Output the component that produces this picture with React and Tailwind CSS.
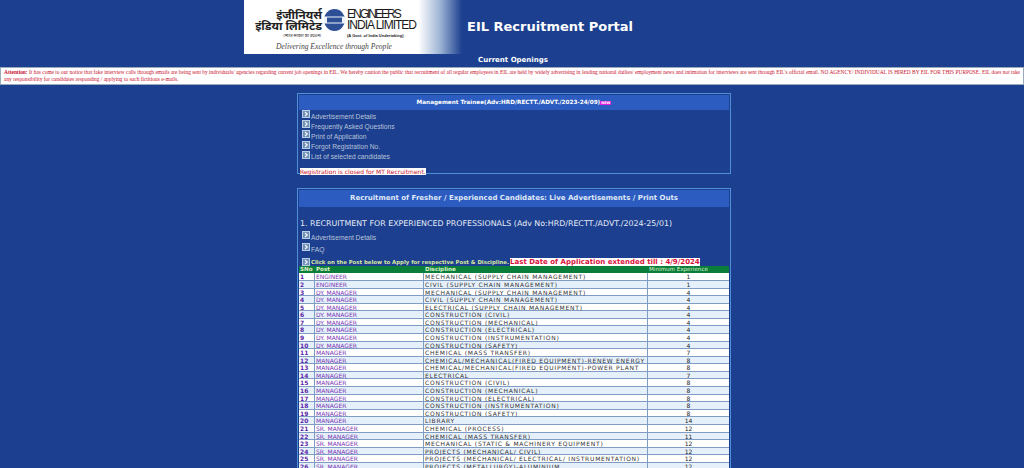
const verdana = "font-['DejaVu_Sans',sans-serif]"
const arial = "font-['Liberation_Sans',sans-serif]"

const rows = [
  ["ENGINEER", "MECHANICAL (SUPPLY CHAIN MANAGEMENT)", 1],
  ["ENGINEER", "CIVIL (SUPPLY CHAIN MANAGEMENT)", 1],
  ["DY. MANAGER", "MECHANICAL (SUPPLY CHAIN MANAGEMENT)", 4],
  ["DY. MANAGER", "CIVIL (SUPPLY CHAIN MANAGEMENT)", 4],
  ["DY. MANAGER", "ELECTRICAL (SUPPLY CHAIN MANAGEMENT)", 4],
  ["DY. MANAGER", "CONSTRUCTION (CIVIL)", 4],
  ["DY. MANAGER", "CONSTRUCTION (MECHANICAL)", 4],
  ["DY. MANAGER", "CONSTRUCTION (ELECTRICAL)", 4],
  ["DY. MANAGER", "CONSTRUCTION (INSTRUMENTATION)", 4],
  ["DY. MANAGER", "CONSTRUCTION (SAFETY)", 4],
  ["MANAGER", "CHEMICAL (MASS TRANSFER)", 7],
  ["MANAGER", "CHEMICAL/MECHANICAL(FIRED EQUIPMENT)-RENEW ENERGY", 8],
  ["MANAGER", "CHEMICAL/MECHANICAL(FIRED EQUIPMENT)-POWER PLANT", 8],
  ["MANAGER", "ELECTRICAL", 7],
  ["MANAGER", "CONSTRUCTION (CIVIL)", 8],
  ["MANAGER", "CONSTRUCTION (MECHANICAL)", 8],
  ["MANAGER", "CONSTRUCTION (ELECTRICAL)", 8],
  ["MANAGER", "CONSTRUCTION (INSTRUMENTATION)", 8],
  ["MANAGER", "CONSTRUCTION (SAFETY)", 8],
  ["MANAGER", "LIBRARY", 14],
  ["SR. MANAGER", "CHEMICAL (PROCESS)", 12],
  ["SR. MANAGER", "CHEMICAL (MASS TRANSFER)", 11],
  ["SR. MANAGER", "MECHANICAL (STATIC & MACHINERY EQUIPMENT)", 12],
  ["SR. MANAGER", "PROJECTS (MECHANICAL/ CIVIL)", 12],
  ["SR. MANAGER", "PROJECTS (MECHANICAL/ ELECTRICAL/ INSTRUMENTATION)", 12],
  ["SR. MANAGER", "PROJECTS (METALLURGY)-ALUMINIUM", 12],
]

function ArrowIcon() {
  return <svg width="8" height="8" viewBox="0 0 8 8" className="shrink-0">
    <rect width="8" height="8" fill="#b9cfe6" />
    <rect x="1" y="1" width="6" height="6" fill="#6f8fb8" />
    <path d="M3 2 L5.2 4 L3 6" fill="none" stroke="#f2f6fb" strokeWidth="1.2" />
  </svg>
}

function LinkItem({ label, className = "" }) {
  return <div className={`flex items-start gap-[1px] h-[10.2px] ${className}`}>
    <ArrowIcon />
    <span className={`${arial} text-[6.7px] leading-[10px] mt-[1.5px] text-[#b8c4da] whitespace-nowrap`}>{label}</span>
  </div>
}

function Logo() {
  return <div className="w-[218px] h-[54px] bg-[linear-gradient(90deg,#ffffff_0%,#ffffff_80%,#9db4d4_90%,#1c3f8f_100%)] shrink-0 pl-[6px] pt-[9px]">
    <div className="flex items-start h-[33px]">
      <div className="w-[72px] text-right text-[#222] font-['Noto_Sans','DejaVu_Sans',sans-serif] whitespace-nowrap">
        <div className="text-[11.8px] leading-[11px] font-bold">इंजीनियर्स</div>
        <div className="text-[11.8px] leading-[11px] font-bold">इंडिया लिमिटेड</div>
        <div className="text-[4px] leading-[6px] mt-[2px] pr-[1px]">(भारत सरकार का उपक्रम)</div>
      </div>
      <svg width="21" height="22" viewBox="0 0 21 22" className="ml-[2px] shrink-0">
        <ellipse cx="10.5" cy="11" rx="10.5" ry="11" fill="#2d4f96" />
        <rect x="0" y="7.5" width="21" height="7" fill="#eef2f8" />
        <rect x="3" y="8.5" width="15" height="5" fill="#2d4f96" />
      </svg>
      <div className={`${arial} ml-[2px] text-[#1a1a1a] whitespace-nowrap`}>
        <div className="text-[12px] leading-[11px] tracking-[-2px]">ENGINEERS</div>
        <div className="text-[12px] leading-[11px] tracking-[-1px]">INDIA LIMITED</div>
        <div className="text-[4px] leading-[6px] mt-[2px] font-bold">(A Govt. of India Undertaking)</div>
      </div>
    </div>
    <div className="font-['Liberation_Serif',serif] italic text-[#444] text-[7.6px] leading-[10px] pl-[26px] whitespace-nowrap">Delivering Excellence through People</div>
  </div>
}

function Panel({ children, className = "" }) {
  return <div className={`w-[434px] ml-[297px] border border-[#4f8fd8] p-[1px] ${className}`}>{children}</div>
}

export default function App() {
  return <div className={`${verdana} w-[1024px] h-[468px] overflow-hidden bg-[#1c3f8f]`}>
    <div className="flex pl-[244px]">
      <Logo />
      <div className="ml-[5px] pt-[17px] text-white font-bold text-[13px] leading-[20px] whitespace-nowrap">EIL Recruitment Portal</div>
    </div>

    <div className="text-center pl-[2px] text-white font-bold text-[7px] leading-[10px] mt-[1px] h-[12px]">Current Openings</div>

    <div className="bg-white border border-[#9ab] h-[18px] px-[3px] pt-[1px] font-['Liberation_Serif',serif] text-[5.4px] leading-[7px] text-[#c8102e] text-justify">
      <b>Attention:</b> It has come to our notice that fake interview calls through emails are being sent by individuals/ agencies regarding current job openings in EIL. We hereby caution the public that recruitment of all regular employees in EIL are held by widely advertising in leading national dailies/ employment news and intimation for interviews are sent through EIL's official email. NO AGENCY/ INDIVIDUAL IS HIRED BY EIL FOR THIS PURPOSE. EIL does not take any responsibility for candidates responding / applying to such fictitious e-mails.
    </div>

    <Panel className="mt-[8px] h-[81px]">
      <div className="h-[15px] bg-[#2d5cc0] flex items-center justify-center text-white font-bold text-[5.7px]">
        Management Trainee(Adv:HRD/RECTT./ADVT./2023-24/09)
        <span className="bg-[#e020e0] text-[3.5px] leading-[4px] px-[1px]">NEW</span>
      </div>
      <div className="pl-[3px]">
        <LinkItem label="Advertisement Details" />
        <LinkItem label="Frequently Asked Questions" />
        <LinkItem label="Print of Application" />
        <LinkItem label="Forgot Registration No." />
        <LinkItem label="List of selected candidates" />
      </div>
      <div className="mt-[7px] ml-[1px] w-fit bg-white text-[#c8102e] text-[6px] leading-[7px] whitespace-nowrap">Registration is closed for MT Recruitment.</div>
    </Panel>

    <Panel className="mt-[14px] h-[300px]">
      <div className="h-[17px] bg-[#2d5cc0] flex items-center justify-center text-[#dfe8f7] font-bold text-[7px]">
        Recruitment of Fresher / Experienced Candidates: Live Advertisements / Print Outs
      </div>
      <div className="mt-[12px] pl-[1px] text-[#e4ebf7] text-[7.9px] leading-[10px] whitespace-nowrap">1. RECRUITMENT FOR EXPERIENCED PROFESSIONALS (Adv No:HRD/RECTT./ADVT./2024-25/01)</div>
      <div className="pl-[3px] mt-[2px]">
        <LinkItem label="Advertisement Details" className="h-[12.4px]" />
        <LinkItem label="FAQ" className="h-[13px]" />
      </div>
      <div className="pl-[3px] flex items-end h-[10px] whitespace-nowrap">
        <ArrowIcon />
        <span className="ml-[1px] text-[#d8e8a0] font-bold text-[5.4px] leading-[7px]">Click on the Post below to Apply for respective Post &amp; Discipline.</span>
        <span className="ml-[1px] bg-white text-[#d8123c] font-bold text-[7px] leading-[8px]">Last Date of Application extended till : 4/9/2024</span>
      </div>
      <div className="text-[6px]">
        <div className="flex h-[7px] leading-[7px] text-[5.6px] bg-[#0a7d3a] text-[#dff2c8] font-bold">
          <div className="w-[16px] pl-[1px]">SNo</div>
          <div className="w-[109px] pl-[1px]">Post</div>
          <div className="w-[224px] pl-[1px]">Discipline</div>
          <div className="w-[81px] pl-[1px] font-normal whitespace-nowrap">Minimum Experience</div>
        </div>
        {rows.map((row, i) => <div key={i} className={`flex h-[7.58px] leading-[7px] border-b border-[#7f9cc4] ${i % 2 === 0 ? "bg-white" : "bg-[#e6f0fa]"}`}>
          <div className="w-[16px] pl-[1px] border-r border-[#7f9cc4] text-[#5a1fa8] font-bold">{i + 1}</div>
          <div className="w-[109px] pl-[1px] border-r border-[#7f9cc4] text-[#7a35b5]">{row[0]}</div>
          <div className="w-[224px] pl-[1px] border-r border-[#7f9cc4] text-[#333] tracking-[0.75px] whitespace-nowrap">{row[1]}</div>
          <div className="w-[81px] text-center text-[#222]">{row[2]}</div>
        </div>)}
      </div>
    </Panel>
  </div>
}
